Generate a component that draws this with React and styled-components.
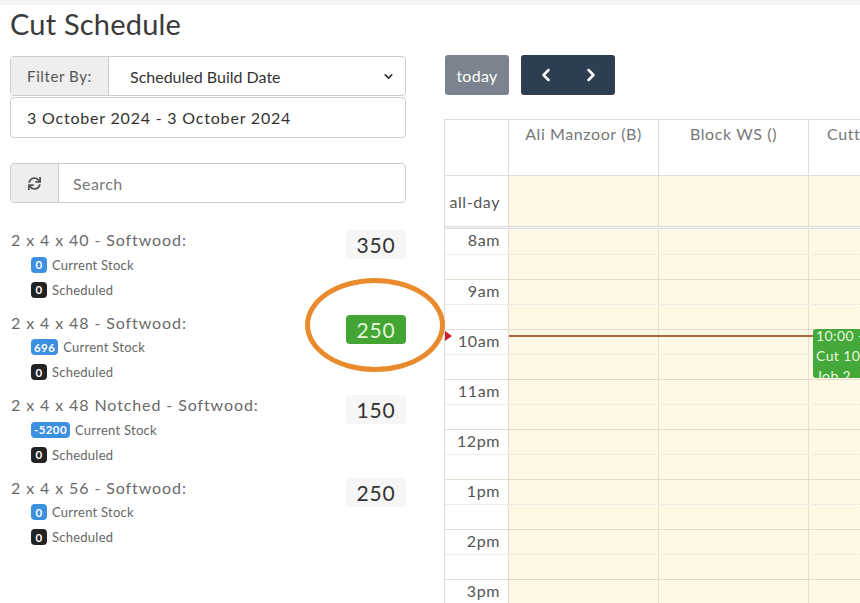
import React from 'react';
import styled, { createGlobalStyle } from 'styled-components';
import { FaSync } from 'react-icons/fa';
import { ChevronDown, ChevronLeft, ChevronRight } from 'lucide-react';

const Global = createGlobalStyle`
  html, body { margin: 0; padding: 0; background: #fff; overflow: hidden; }
  body { font-family: Lato, "Open Sans", sans-serif; color: #333; width: 860px; height: 603px; }
  * { box-sizing: border-box; }
`;

const TopStrip = styled.div`
  height: 5px;
  background: #f3f3f3;
`;

const Main = styled.div`
  display: flex;
  gap: 38px;
  padding-left: 10px;
`;

const LeftCol = styled.div`
  width: 396px;
  flex: none;
`;

const Title = styled.h1`
  margin: 0;
  height: 51px;
  padding-top: 2px;
  font-size: 29px;
  font-weight: 400;
  line-height: 34px;
  color: #3a3a3a;
  letter-spacing: 0.2px;
`;

const Group = styled.div`
  display: flex;
  height: ${p => p.$h || 40}px;
  margin-top: ${p => p.$mt || 0}px;
  border: 1px solid #ccc;
  border-radius: 4px;
  overflow: hidden;
  background: #fff;
`;

const Addon = styled.div`
  flex: none;
  width: ${p => p.$w}px;
  display: flex;
  align-items: center;
  justify-content: center;
  background: #eee;
  border-right: 1px solid #ccc;
  color: #555;
  font-size: 15px;
  letter-spacing: 0.6px;
`;

const Field = styled.div`
  flex: 1;
  display: flex;
  align-items: center;
  padding-left: ${p => p.$pl || 16}px;
  padding-right: 10px;
  font-size: 16px;
  letter-spacing: ${p => p.$ls || 0}px;
  color: ${p => (p.$placeholder ? '#777' : '#333')};
  justify-content: space-between;
`;

const ItemList = styled.div`
  margin-top: 25px;
`;

const Item = styled.div`
  display: flex;
  justify-content: space-between;
  align-items: flex-start;
  height: 82.5px;
`;

const ItemInfo = styled.div`
  display: flex;
  flex-direction: column;
`;

const ItemName = styled.div`
  height: 24px;
  line-height: 24px;
  font-size: 16px;
  letter-spacing: 0.9px;
  color: #6a6a6a;
  padding-left: 1px;
`;

const StatRow = styled.div`
  height: 25px;
  display: flex;
  align-items: center;
  gap: 5px;
  padding-left: 21px;
  font-size: 13px;
  letter-spacing: 0.25px;
  color: #666;
`;

const Badge = styled.span`
  display: inline-flex;
  align-items: center;
  justify-content: center;
  min-width: 16px;
  height: 16px;
  padding: 0 3px;
  border-radius: 4px;
  font-size: 11.5px;
  font-weight: 700;
  letter-spacing: 0.4px;
  color: #fff;
  background: ${p => (p.$dark ? '#232323' : '#3d8fe0')};
`;

const Qty = styled.div`
  position: relative;
  margin-top: ${p => (p.$hl ? 4 : 2)}px;
  width: 60px;
  height: 29px;
  display: flex;
  align-items: center;
  justify-content: center;
  border-radius: 4px;
  font-size: 21px;
  letter-spacing: 0.8px;
  background: ${p => (p.$hl ? '#43a534' : '#f6f6f6')};
  color: ${p => (p.$hl ? '#e4f7d6' : '#333')};
`;

const Ring = styled.span`
  position: absolute;
  left: -41px;
  top: -37px;
  width: 140px;
  height: 94px;
  border: 5px solid #e98a2c;
  border-radius: 50%;
  pointer-events: none;
`;

const RightCol = styled.div`
  flex: 1;
  min-width: 0;
  overflow: hidden;
  padding-top: 50px;
  height: 598px;
`;

const Toolbar = styled.div`
  display: flex;
  gap: 12px;
  height: 40px;
  padding-left: 1px;
`;

const TodayBtn = styled.div`
  width: 64px;
  display: flex;
  align-items: center;
  justify-content: center;
  background: #7b848e;
  color: #fff;
  font-size: 16px;
  letter-spacing: 0.3px;
  border-radius: 3px;
`;

const NavBtns = styled.div`
  width: 94px;
  display: flex;
  align-items: center;
  justify-content: center;
  gap: 25px;
  background: #2c3e50;
  color: #fff;
  border-radius: 3px;
`;

const Cal = styled.div`
  margin-top: 24px;
  width: 520px;
  border-left: 1px solid #ddd;
  border-top: 1px solid #ddd;
`;

const Row = styled.div`
  display: grid;
  grid-template-columns: 64px 150px 150px 150px;
  height: ${p => p.$h}px;
  border-top: ${p => p.$line || 'none'};
`;

const HeadCell = styled.div`
  border-right: 1px solid #ddd;
  text-align: center;
  padding-top: 4px;
  font-size: 16px;
  letter-spacing: 0.6px;
  color: #777;
  white-space: nowrap;
  overflow: hidden;
`;

const AxisCell = styled.div`
  display: flex;
  align-items: ${p => (p.$center ? 'center' : 'flex-start')};
  justify-content: flex-end;
  padding-right: 8px;
  padding-top: ${p => (p.$center ? 0 : 1)}px;
  font-size: 16px;
  letter-spacing: 0.6px;
  color: #555;
  border-right: 1px solid #ddd;
  background: #fff;
`;

const DayCell = styled.div`
  background: #fef8e4;
  border-right: 1px solid #e4dfcf;
`;

const Divider = styled.div`
  height: 3px;
  background: #f2f2f2;
  border-top: 1px solid #ddd;
  border-bottom: 1px solid #ddd;
`;

const Body = styled.div`
  position: relative;
`;

const NowLine = styled.div`
  position: absolute;
  left: 64px;
  right: 0;
  top: ${p => p.$top}px;
  border-top: 2px solid #a9683f;
`;

const NowArrow = styled.div`
  position: absolute;
  left: 0;
  top: ${p => p.$top - 5}px;
  width: 0;
  height: 0;
  border-top: 5px solid transparent;
  border-bottom: 5px solid transparent;
  border-left: 7px solid #c8232c;
`;

const Event = styled.div`
  position: absolute;
  left: 368px;
  top: ${p => p.$top}px;
  width: 140px;
  height: ${p => p.$h}px;
  background: #45a83a;
  border-radius: 3px;
  padding: 0 3px;
  color: #e8f6df;
  font-size: 14px;
  letter-spacing: 0.4px;
  line-height: 20px;
  overflow: hidden;
  white-space: nowrap;
`;

const EventText = styled.div`
  margin-top: -3px;
`;

const items = [
  { name: '2 x 4 x 40 - Softwood:', stock: '0', qty: '350' },
  { name: '2 x 4 x 48 - Softwood:', stock: '696', qty: '250', hl: true },
  { name: '2 x 4 x 48 Notched - Softwood:', stock: '-5200', qty: '150' },
  { name: '2 x 4 x 56 - Softwood:', stock: '0', qty: '250' },
];

const hours = ['8am', '9am', '10am', '11am', '12pm', '1pm', '2pm', '3pm'];

export default function App() {
  const slots = [];
  hours.forEach(h => {
    slots.push({ label: h, hour: true });
    slots.push({ label: '', hour: false });
  });
  return (
    <>
      <Global />
      <TopStrip />
      <Main>
        <LeftCol>
          <Title>Cut Schedule</Title>
          <Group $h={40}>
            <Addon $w={98}>Filter By:</Addon>
            <Field $pl={21}>
              <span>Scheduled Build Date</span>
              <ChevronDown size={13} strokeWidth={3} color="#333" />
            </Field>
          </Group>
          <Group $h={41} $mt={1}>
            <Field $pl={16} $ls={0.8}>3 October 2024 - 3 October 2024</Field>
          </Group>
          <Group $h={40} $mt={25}>
            <Addon $w={48}>
              <FaSync size={13} color="#555" />
            </Addon>
            <Field $pl={14} $ls={0.4} $placeholder>Search</Field>
          </Group>
          <ItemList>
            {items.map(it => (
              <Item key={it.name}>
                <ItemInfo>
                  <ItemName>{it.name}</ItemName>
                  <StatRow>
                    <Badge>{it.stock}</Badge>
                    Current Stock
                  </StatRow>
                  <StatRow>
                    <Badge $dark>0</Badge>
                    Scheduled
                  </StatRow>
                </ItemInfo>
                <Qty $hl={it.hl}>
                  {it.qty}
                  {it.hl && <Ring />}
                </Qty>
              </Item>
            ))}
          </ItemList>
        </LeftCol>
        <RightCol>
          <Toolbar>
            <TodayBtn>today</TodayBtn>
            <NavBtns>
              <ChevronLeft size={20} strokeWidth={3} />
              <ChevronRight size={20} strokeWidth={3} />
            </NavBtns>
          </Toolbar>
          <Cal>
            <Row $h={55}>
              <HeadCell />
              <HeadCell>Ali Manzoor (B)</HeadCell>
              <HeadCell>Block WS ()</HeadCell>
              <HeadCell>Cutting WS (A)</HeadCell>
            </Row>
            <Row $h={51} $line="1px solid #ddd">
              <AxisCell $center>all-day</AxisCell>
              <DayCell />
              <DayCell />
              <DayCell />
            </Row>
            <Divider />
            <Body>
              {slots.map((s, i) => (
                <Row
                  key={i}
                  $h={25}
                  $line={i === 0 ? 'none' : s.hour ? '1px solid #e2ddd0' : '1px dotted #e2ddd0'}
                >
                  <AxisCell>{s.label}</AxisCell>
                  <DayCell />
                  <DayCell />
                  <DayCell />
                </Row>
              ))}
              <NowLine $top={106} />
              <NowArrow $top={107} />
              <Event $top={100} $h={49}>
                <EventText>
                  10:00 - 11:00
                  <br />
                  Cut 10-03
                  <br />
                  Job 2
                </EventText>
              </Event>
            </Body>
          </Cal>
        </RightCol>
      </Main>
    </>
  );
}
